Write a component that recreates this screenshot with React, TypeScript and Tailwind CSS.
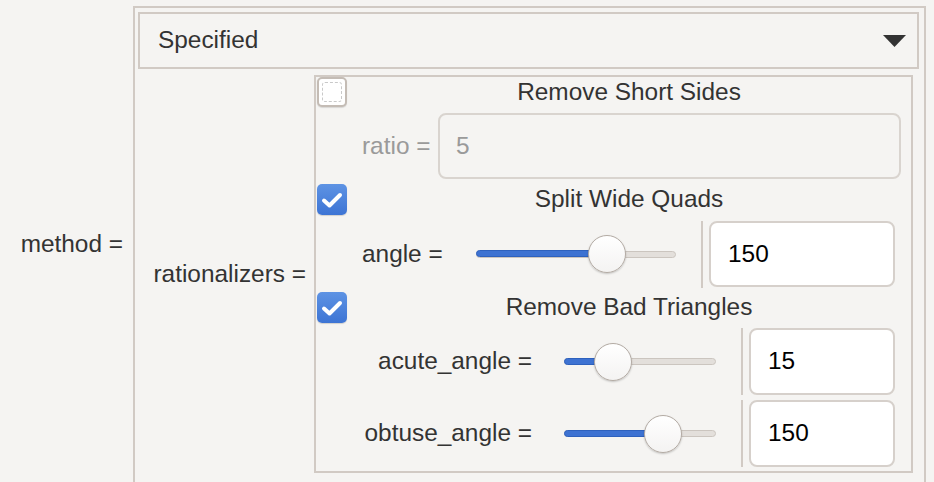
import React from 'react';

const BORDER = 'border-[#d1cac4]';

function CheckBox({ checked }: { checked: boolean }) {
  if (!checked) {
    return (
      <div className="flex h-[30px] w-[30px] shrink-0 rounded-[5px] border-2 border-[#c4bcb5] bg-white p-[3px] shadow-[0_1px_1px_rgba(0,0,0,0.12)]">
        <div className="flex-1 rounded-[3px] border border-dashed border-[#c9c9c9]" />
      </div>
    );
  }
  return (
    <div className="flex h-[31px] w-[30px] shrink-0 items-center justify-center rounded-[5px] bg-gradient-to-b from-[#5e93e4] to-[#3d74d4] shadow-[0_1px_1px_rgba(0,0,0,0.15)]">
      <svg width="22" height="18" viewBox="0 0 22 18">
        <path d="M3 9.5 L8.5 14.5 L19 4" fill="none" stroke="white" strokeWidth="4" strokeLinecap="round" strokeLinejoin="round" />
      </svg>
    </div>
  );
}

function Slider({ width, pos }: { width: number; pos: number }) {
  return (
    <div className="relative flex h-[40px] shrink-0 items-center" style={{ width }}>
      <div className="h-[7px] w-full rounded-full border border-[#cbc5bf] bg-[#e3dfdb]" />
      <div
        className="absolute left-0 top-[16px] h-[7px] rounded-full border border-[#2e61bd] bg-[#3d72d2]"
        style={{ width: pos }}
      />
      <div
        className="absolute top-[1px] h-[38px] w-[38px] rounded-full border-[1.5px] border-[#b3aba4] bg-gradient-to-b from-white to-[#f4f3f2] shadow-[0_1px_2px_rgba(0,0,0,0.2)]"
        style={{ left: pos - 19 }}
      />
    </div>
  );
}

function NumberBox({ value, width }: { value: string; width: number }) {
  return (
    <div
      className="flex h-full shrink-0 items-center rounded-[8px] border-2 border-[#d6d0cb] bg-white pl-[17px] text-black"
      style={{ width }}
    >
      {value}
    </div>
  );
}

export default function App() {
  return (
    <div className="flex h-[482px] w-[934px] overflow-hidden bg-[#f5f4f2] font-['Liberation_Sans',Arial,sans-serif] text-[24.4px] leading-none text-[#333333]">
      <div className="flex w-[133px] shrink-0 items-center justify-end pr-[10px] pt-[6px]">method =</div>

      <div className={`mt-[6px] flex h-[490px] w-[793px] shrink-0 flex-col border-2 ${BORDER} pl-[3px] pt-[4px]`}>
        <div className={`flex h-[57px] w-[781px] items-center justify-between border-2 ${BORDER} pl-[18px] pr-[11px]`}>
          <span>Specified</span>
          <svg width="23" height="12" viewBox="0 0 23 12">
            <path d="M0 0 H23 L11.5 12 Z" fill="#333333" />
          </svg>
        </div>

        <div className="mt-[6px] flex">
          <div className="flex w-[176px] shrink-0 items-center justify-end pr-[8px]">rationalizers =</div>

          <div className={`flex h-[398px] w-[599px] shrink-0 flex-col border-2 ${BORDER}`}>
            {/* Remove Short Sides */}
            <div className="flex h-[30px] items-center pl-[1px]">
              <CheckBox checked={false} />
              <div className="flex-1 text-center">Remove Short Sides</div>
            </div>
            <div className="mt-[6px] flex h-[66px] items-center pl-[46px]">
              <span className="w-[76px] text-[#9a9a9a]">ratio =</span>
              <div className="flex h-full w-[463px] items-center rounded-[8px] border-2 border-[#d9d4cf] pl-[16px] text-[#9a9a9a]">
                5
              </div>
            </div>

            {/* Split Wide Quads */}
            <div className="mt-[5px] flex h-[31px] items-center pl-[1px]">
              <CheckBox checked />
              <div className="flex-1 text-center">Split Wide Quads</div>
            </div>
            <div className="mt-[6px] flex h-[66px] items-center pl-[46px]">
              <span className="w-[114px] shrink-0">angle =</span>
              <Slider width={200} pos={131} />
              <div className="ml-[25px] h-[67px] w-[2px] shrink-0 bg-[#d1cac4]" />
              <div className="ml-[6px] h-full">
                <NumberBox value="150" width={186} />
              </div>
            </div>

            {/* Remove Bad Triangles */}
            <div className="mt-[5px] flex h-[31px] items-center pl-[1px]">
              <CheckBox checked />
              <div className="flex-1 text-center">Remove Bad Triangles</div>
            </div>
            <div className="mt-[5px] flex h-[67px] items-center">
              <span className="w-[216px] shrink-0 text-right">acute_angle =</span>
              <div className="ml-[32px]">
                <Slider width={152} pos={49} />
              </div>
              <div className="ml-[25px] h-[67px] w-[2px] shrink-0 bg-[#d1cac4]" />
              <div className="ml-[6px] h-full">
                <NumberBox value="15" width={146} />
              </div>
            </div>
            <div className="mt-[5px] flex h-[67px] items-center">
              <span className="w-[216px] shrink-0 text-right">obtuse_angle =</span>
              <div className="ml-[32px]">
                <Slider width={152} pos={99} />
              </div>
              <div className="ml-[25px] h-[67px] w-[2px] shrink-0 bg-[#d1cac4]" />
              <div className="ml-[6px] h-full">
                <NumberBox value="150" width={146} />
              </div>
            </div>
          </div>
        </div>
      </div>
    </div>
  );
}
